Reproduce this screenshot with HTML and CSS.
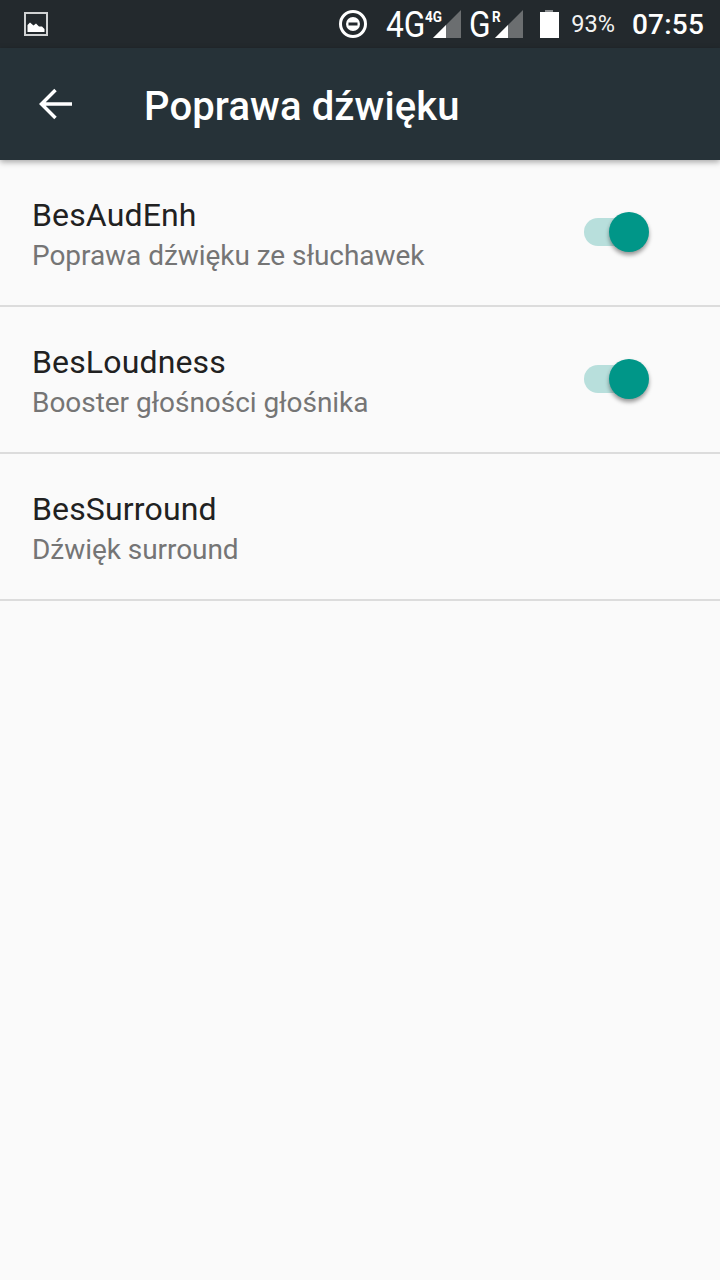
FILE: index.html
```html
<!DOCTYPE html>
<html>
<head>
    <meta charset="utf-8">
    <meta name="viewport" content="width=device-width, initial-scale=1">
    <title>Poprawa dźwięku</title>
    <link rel="stylesheet" href="styles.css">
</head>

<body>
    <div class="status-bar">
        <svg class="notif-icon" width="24" height="24" viewBox="0 0 24 24">
            <rect x="1" y="1" width="22" height="22" fill="none" stroke="#d0d2d3" stroke-width="2"/>
            <path d="M3.500 20V13L6 10.500L9.500 13.500L12 11.500L15 14.500L18 14.500L20.500 17V20Z" fill="#fff"/>
        </svg>
        <div class="status-right">
            <svg class="dnd-icon" width="30" height="30" viewBox="0 0 30 30">
                <circle cx="15" cy="15" r="12.500" fill="none" stroke="#fff" stroke-width="3"/>
                <circle cx="15" cy="15" r="7" fill="#fff"/>
                <rect x="10.500" y="13.500" width="9" height="3" fill="#23292d"/>
            </svg>
            <div class="net net-first">
                <span class="net-big">4G</span><span class="net-small">4G</span>
                <svg class="signal" width="30" height="30" viewBox="0 0 30 30">
                    <path d="M29 1V29H1Z" fill="#6b6e70"/>
                    <path d="M14 16V29H1Z" fill="#fff"/>
                </svg>
            </div>
            <div class="net net-second">
                <span class="net-big">G</span><span class="net-small">R</span>
                <svg class="signal" width="30" height="30" viewBox="0 0 30 30">
                    <path d="M29 1V29H1Z" fill="#6b6e70"/>
                    <path d="M14 16V29H1Z" fill="#fff"/>
                </svg>
            </div>
            <svg class="battery" width="21" height="30" viewBox="0 0 21 30">
                <path d="M6 1H14V3H20V29H1V3H6Z" fill="#fff"/>
                <path d="M6 1H14V3H6Z" fill="#8b8e90"/>
            </svg>
            <span class="battery-level">93%</span>
            <span class="clock">07:55</span>
        </div>
    </div>

    <header class="app-bar">
        <svg class="back-icon" width="34" height="32" viewBox="0 0 34 32">
            <path d="M33 16H3M16.500 2L2.500 16L16.500 30" fill="none" stroke="#fff" stroke-width="3.500"/>
        </svg>
        <h1>Poprawa dźwięku</h1>
    </header>

    <div class="settings-list">
        <div class="setting-row">
            <div class="setting-text">
                <div class="setting-title">BesAudEnh</div>
                <div class="setting-summary">Poprawa dźwięku ze słuchawek</div>
            </div>
            <div class="switch"><span class="switch-track"></span><span class="switch-thumb"></span></div>
        </div>
        <div class="setting-row">
            <div class="setting-text">
                <div class="setting-title">BesLoudness</div>
                <div class="setting-summary">Booster głośności głośnika</div>
            </div>
            <div class="switch"><span class="switch-track"></span><span class="switch-thumb"></span></div>
        </div>
        <div class="setting-row">
            <div class="setting-text">
                <div class="setting-title">BesSurround</div>
                <div class="setting-summary">Dźwięk surround</div>
            </div>
        </div>
    </div>
</body>
</html>
```

FILE: styles.css
```css
/* Basic page */
html, body {
    height: 100%;
}
body {
    font-family: Roboto, "Liberation Sans", sans-serif;
    margin: 0;
    padding: 0;
    background-color: #fafafa;
    overflow: hidden;
}

/* Status bar */
.status-bar {
    display: flex;
    align-items: center;
    justify-content: space-between;
    height: 48px;
    padding: 0 16px 0 24px;
    background-color: #23292d;
    color: #fff;
}
.notif-icon {
    display: block;
}
.status-right {
    display: flex;
    align-items: center;
}
.dnd-icon {
    display: block;
    margin-right: 18px;
}
.net {
    position: relative;
    display: flex;
    align-items: flex-start;
    height: 34px;
}
.net-first {
    width: 76px;
    margin-right: 7px;
}
.net-second {
    width: 55px;
    margin-right: 15px;
}
.net-big {
    font-size: 36px;
    line-height: 36px;
    transform: scaleX(0.88);
    transform-origin: left;
}
.net-small {
    position: absolute;
    top: 1px;
    font-size: 15px;
    line-height: 18px;
    font-weight: 700;
    transform: scaleX(0.9);
    transform-origin: left;
}
.net-first .net-small {
    left: 39px;
}
.net-second .net-small {
    left: 23px;
}
.signal {
    position: absolute;
    right: 0;
    top: 2px;
}
.battery {
    display: block;
    margin-right: 11px;
}
.battery-level {
    font-size: 23.500px;
    margin-right: 17px;
    color: #f2f3f3;
}
.clock {
    font-size: 28px;
    font-weight: 500;
    letter-spacing: 0.2px;
}

/* Toolbar */
.app-bar {
    display: flex;
    align-items: center;
    height: 112px;
    background-color: #263238;
    box-shadow: 0 2px 6px rgba(0, 0, 0, 0.35);
    position: relative;
}
.back-icon {
    display: block;
    margin-left: 39px;
    margin-right: 71px;
}
.app-bar h1 {
    margin: 5px 0 0;
    font-size: 40px;
    font-weight: 500;
    letter-spacing: 0.13px;
    color: #fff;
}

/* Settings rows */
.setting-row {
    display: flex;
    align-items: center;
    justify-content: space-between;
    box-sizing: border-box;
    height: 147px;
    padding: 0 71px 0 32px;
    border-bottom: 2px solid #dcdcdc;
}
.setting-text {
    margin-top: 2px;
}
.setting-title {
    font-size: 32px;
    line-height: 44px;
    letter-spacing: 0.15px;
    color: #212121;
}
.setting-summary {
    font-size: 28px;
    line-height: 36px;
    letter-spacing: -0.05px;
    padding-top: 1px;
    color: #757575;
}

/* Switch */
.switch {
    position: relative;
    width: 66px;
    height: 40px;
    margin-bottom: 2px;
}
.switch-track {
    position: absolute;
    left: 1px;
    top: 6px;
    width: 56px;
    height: 28px;
    border-radius: 14px;
    background-color: #b8dfdc;
}
.switch-thumb {
    position: absolute;
    right: 0;
    top: 0;
    width: 40px;
    height: 40px;
    border-radius: 50%;
    background-color: #009688;
    box-shadow: 0 3px 4px rgba(0, 0, 0, 0.4);
}
```
